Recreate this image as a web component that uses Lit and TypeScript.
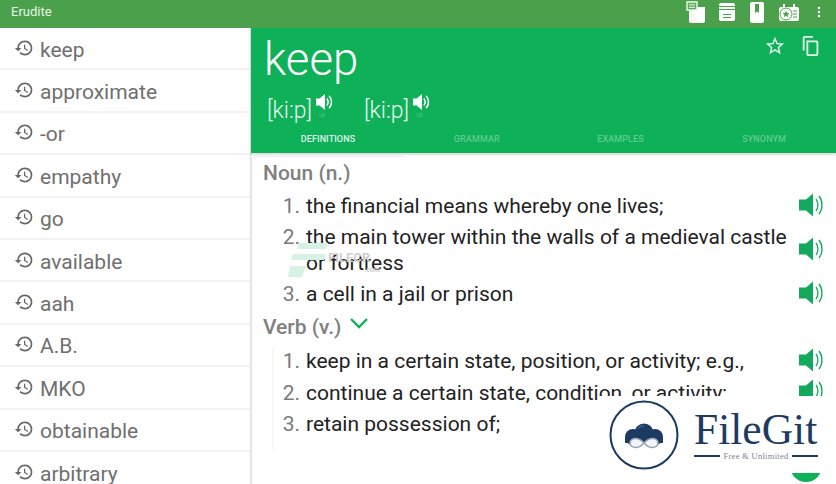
import { LitElement, html, css, svg } from "lit";
import { customElement } from "lit/decorators.js";

const words = ["keep", "approximate", "-or", "empathy", "go", "available", "aah", "A.B.", "MKO", "obtainable", "arbitrary"];

const history = html`<svg class="hist" viewBox="0 0 24 24"><path fill="#666" d="M13 3c-4.970 0-9 4.030-9 9H1l3.890 3.890.07.140L9 12H6c0-3.870 3.130-7 7-7s7 3.130 7 7-3.130 7-7 7c-1.930 0-3.680-.79-4.940-2.060l-1.420 1.420C8.270 19.990 10.510 21 13 21c4.970 0 9-4.030 9-9s-4.030-9-9-9zm-1 5v5l4.280 2.540.72-1.210-3.500-2.080V8H12z"/></svg>`;

const bigSpeaker = html`<svg class="spk" viewBox="0 0 24 24"><path fill="#12a95c" d="M0 6.500h7L14 .5v23l-7-6H0z"/><path fill="none" stroke="#12a95c" stroke-width="1.300" d="M17 6c2.600 3.500 2.600 8.500 0 12M20 3c4 5 4 13 0 18"/></svg>`;

const smallSpeaker = html`<svg class="sspk" viewBox="0 0 20 20"><path fill="#fff" d="M0 6h4l6-5v18l-6-5H0z"/><path fill="none" stroke="#fff" stroke-width="1.700" d="M12 6c2 2.200 2 5.800 0 8M14.500 3c3.600 3.800 3.600 10.200 0 14"/></svg>`;

interface Def { n: number; lines: string[] }

@customElement("app-root")
export class AppRoot extends LitElement {
  static styles = css`
    :host { display: block; width: 836px; height: 484px; overflow: hidden; position: relative; background: #fff; font-family: Roboto, "Noto Sans", sans-serif; }
    .bar { height: 28px; background: #4ba14b; display: flex; align-items: center; padding: 0 11px; color: #e8f5e8; font-size: 13px; box-sizing: border-box; }
    .bar .title { flex: 1; margin-top: -6px; }
    .bar .icons { display: flex; align-items: center; gap: 10.5px; margin-top: -4px; }
    .bar svg { display: block; }
    .bar .dots { margin-left: 3px; }
    .main { display: flex; height: 456px; }
    .side { width: 252px; flex: none; box-sizing: border-box; border-right: 2px solid #e4e4e4; overflow: hidden; }
    .row { height: 42.4px; box-sizing: border-box; border-bottom: 2px solid #f2f2f2; display: flex; align-items: center; padding: 3px 0 0 14px; gap: 6px; font-size: 21px; color: #6f6f6f; }
    .hist { width: 20px; height: 20px; flex: none; margin-top: -4px; }
    .content { flex: 1; min-width: 0; margin-left: -1px; }
    .head { height: 125px; background: #0eb058; color: #fff; position: relative; box-shadow: 0 2px 2px rgba(0,0,0,.14); display: flex; flex-direction: column; }
    .word { font-size: 45.5px; line-height: 52px; padding: 6px 0 0 13px; height: 53px; font-weight: 300; }
    .phon { display: flex; gap: 29px; padding: 7px 0 0 16px; height: 29px; }
    .ph { display: flex; font-size: 23px; line-height: 33px; color: #e9f9f0; font-weight: 300; }
    .spkbox { position: relative; width: 19px; margin-left: 4px; }
    .sspk { width: 18px; height: 18px; display: block; margin-top: -1px; }
    .spkbox span { position: absolute; left: 3px; top: 18px; font-size: 5px; line-height: 6px; color: #7fd6a4; }
    .tabs { display: grid; grid-template-columns: 154px 1fr 1fr 1fr; margin-top: auto; height: 30px; }
    .tab { font-size: 9px; font-weight: 500; color: #5fcc8f; text-align: center; line-height: 32px; letter-spacing: .1px; box-sizing: border-box; }
    .tab.on { color: #dff5e8; border-bottom: 2px solid #f2f2f2; }
    .tools { position: absolute; right: 14px; top: 7px; display: flex; gap: 14px; }
    .tools svg { width: 22px; height: 22px; display: block; }
    .body { padding: 7px 0 0 12px; }
    .pos { font-size: 21px; font-weight: 500; color: #808080; line-height: 26px; display: flex; align-items: center; gap: 8px; }
    .pos svg { width: 20px; height: 14px; margin-top: -8px; }
    .defs { margin-top: 7px; padding: 0 13px 2px 0; display: flex; flex-direction: column; }
    .defs.verb { margin: 8px 0 0 9px; border-left: 2px solid #f6f6f6; padding-bottom: 6px; }
    .def { display: grid; grid-template-columns: 43px 1fr 24px; align-items: center; font-size: 21px; line-height: 26px; color: #222; margin-bottom: 5px; white-space: nowrap; }
    .verb .def { grid-template-columns: 32px 1fr 24px; margin-bottom: 5.5px; }
    .num { color: #7a7a7a; text-align: right; padding-right: 6px; align-self: start; }
    .spk { width: 24px; height: 24px; display: block; margin-top: -3px; }
    .logo { position: absolute; left: 600px; top: 396px; width: 236px; height: 77px; background: #fff; display: flex; align-items: center; gap: 15px; padding-left: 9px; box-sizing: border-box; }
    .logo .mark { width: 70px; height: 70px; flex: none; }
    .lt { color: #1d3b62; font-family: "Liberation Serif", serif; width: 124px; }
    .lt .fg { font-size: 43.5px; line-height: 42px; }
    .lt .sub { display: flex; align-items: center; gap: 3px; font-size: 8.6px; line-height: 10px; color: #7d838e; margin-top: 1px; white-space: nowrap; letter-spacing: .25px; }
    .lt .sub i { flex: 1; height: 2px; background: #1d3b62; }
    .fab { position: absolute; left: 790px; top: 449px; width: 32px; height: 33px; border-radius: 50%; background: #0eb058; }
    .wm { position: absolute; left: 288px; top: 243px; display: flex; align-items: flex-end; color: #cfcfcf; font-size: 13px; font-weight: 700; }
    .wm svg { width: 40px; height: 34px; display: block; }
    .wm span { margin: 0 0 12px 0; line-height: 14px; }
    .wm small { font-size: 7px; line-height: 9px; margin: 0 0 2px -6px; }
  `;

  private defRow(d: Def) {
    return html`<div class="def"><span class="num">${d.n}.</span><span>${d.lines.map((l, i) => html`${i ? html`<br />` : ""}${l}`)}</span>${bigSpeaker}</div>`;
  }

  render() {
    const noun: Def[] = [
      { n: 1, lines: ["the financial means whereby one lives;"] },
      { n: 2, lines: ["the main tower within the walls of a medieval castle", "or fortress"] },
      { n: 3, lines: ["a cell in a jail or prison"] },
    ];
    const verb: Def[] = [
      { n: 1, lines: ["keep in a certain state, position, or activity; e.g.,"] },
      { n: 2, lines: ["continue a certain state, condition, or activity;"] },
      { n: 3, lines: ["retain possession of;"] },
    ];
    return html`
      <div class="bar">
        <span class="title">Erudite</span>
        <div class="icons">
          <svg width="20" height="22" viewBox="0 0 20 22"><path fill="#fff" d="M3 6h16v14a2 2 0 0 1-2 2H5a2 2 0 0 1-2-2z"/><path fill="#5cab5c" stroke="#eef8ee" stroke-width="1.400" d="M1 1h10v8H6l-2 2.500V9H1z"/><path stroke="#eef8ee" d="M3 3.800h6M3 6.300h6"/></svg>
          <svg width="20" height="22" viewBox="0 0 20 22"><rect x="2" y="2" width="16" height="18" rx="2" fill="#fff"/><path stroke="#4ba14b" stroke-width="1.200" d="M2 5.500h16M2 8.500h16M6 13.500h8M6 16.500h8"/></svg>
          <svg width="20" height="22" viewBox="0 0 20 22"><path fill="#fff" d="M3 3a2 2 0 0 1 2-2h10a2 2 0 0 1 2 2v17a2 2 0 0 1-2 2H5a2 2 0 0 1-2-2z"/><path fill="#4ba14b" d="M8 3h4v9l-2-1.500L8 12z"/></svg>
          <svg width="22" height="22" viewBox="0 0 22 22"><rect x="1" y="6" width="20" height="14" rx="2" fill="#fff"/><path fill="#fff" d="M5 3h2v4H5zM15 3h2v4h-2z"/><circle cx="8" cy="13" r="6" fill="#fff" stroke="#4ba14b"/><path fill="#4ba14b" d="M8 9.500l1 2.400 2.500.2-1.900 1.600.6 2.500L8 14.800l-2.200 1.400.6-2.500-1.900-1.600 2.500-.2z"/><path stroke="#4ba14b" d="M15 10h4M15 13h4M15 16h4"/></svg>
          <svg class="dots" width="12" height="22" viewBox="0 0 12 22"><g fill="#fff"><circle cx="6" cy="7" r="1.300"/><circle cx="6" cy="11" r="1.300"/><circle cx="6" cy="15" r="1.300"/></g></svg>
        </div>
      </div>
      <div class="main">
        <div class="side">${words.map((w) => html`<div class="row">${history}<span>${w}</span></div>`)}</div>
        <div class="content">
          <div class="head">
            <div class="word">keep</div>
            <div class="phon">
              <div class="ph">[ki:p]<div class="spkbox">${smallSpeaker}<span>UK</span></div></div>
              <div class="ph">[ki:p]<div class="spkbox">${smallSpeaker}<span>US</span></div></div>
            </div>
            <div class="tabs">
              <div class="tab on">DEFINITIONS</div><div class="tab">GRAMMAR</div><div class="tab">EXAMPLES</div><div class="tab">SYNONYM</div>
            </div>
            <div class="tools">
              <svg viewBox="0 0 24 24"><path fill="#e6f8ee" d="M22 9.240l-7.190-.62L12 2 9.190 8.630 2 9.240l5.460 4.730L5.820 21 12 17.270 18.180 21l-1.630-7.030L22 9.240zM12 15.400l-3.760 2.270 1-4.280-3.320-2.880 4.380-.38L12 6.100l1.710 4.040 4.380.38-3.320 2.880 1 4.280L12 15.400z"/></svg>
              <svg viewBox="0 0 24 24"><path fill="none" stroke="#e6f8ee" stroke-width="2" d="M8 7h10a1 1 0 0 1 1 1v13a1 1 0 0 1-1 1H9a1 1 0 0 1-1-1z"/><path fill="none" stroke="#e6f8ee" stroke-width="2" d="M4 17V3a1 1 0 0 1 1-1h9"/></svg>
            </div>
          </div>
          <div class="body">
            <div class="pos">Noun (n.)</div>
            <div class="defs">${noun.map((d) => this.defRow(d))}</div>
            <div class="pos">Verb (v.) <svg viewBox="0 0 20 14"><path fill="none" stroke="#0eb058" stroke-width="2.400" d="M2 3l8 8 8-8"/></svg></div>
            <div class="defs verb">${verb.map((d) => this.defRow(d))}</div>
          </div>
        </div>
      </div>
      <div class="wm">
        <svg viewBox="0 0 40 34">${svg`<g fill="#d6f2e3"><path d="M11 0h29l-2 6H9zM5 11h33l-2 6H3zM2 23h16l-4 11H0z"/></g>`}</svg>
        <span>FILECR</span><small>.com</small>
      </div>
      <div class="fab"></div>
      <div class="logo">
        <svg class="mark" viewBox="0 0 70 70">
          <circle cx="35" cy="35" r="33.500" fill="#fff" stroke="#1d3b62" stroke-width="2"/>
          <g fill="#1d3b62"><circle cx="24" cy="37" r="8"/><circle cx="35" cy="33" r="9.500"/><circle cx="46" cy="37" r="8"/><path d="M16 38h38v5H16z"/></g>
          <path fill="none" stroke="#5f7fa8" stroke-width=".8" d="M29 29c1-2 3-3 6-3"/>
          <path fill="#f2f4f7" stroke="#9aa5b5" stroke-width="1.600" d="M35 43c-3-3.500-6-4.500-8.500-4.500-3.200 0-5.500 2-5.500 4.500s2.300 4.500 5.500 4.500c2.500 0 5.500-1 8.500-4.500 3-3.500 6-4.500 8.500-4.500 3.200 0 5.500 2 5.500 4.500s-2.300 4.500-5.500 4.500c-2.500 0-5.500-1-8.500-4.500z"/>
        </svg>
        <div class="lt">
          <div class="fg">FileGit</div>
          <div class="sub"><i></i>Free &amp; Unlimited<i></i></div>
        </div>
      </div>
    `;
  }
}
